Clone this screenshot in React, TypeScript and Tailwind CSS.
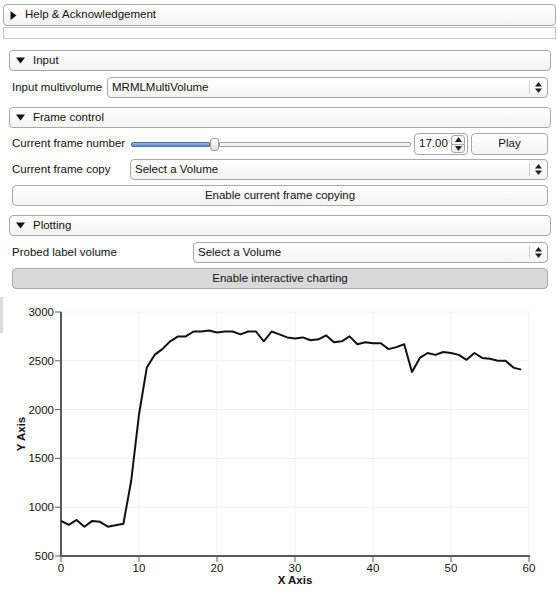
import React from 'react';

const values = [
  860, 820, 870, 800, 860, 850, 800, 815, 830, 1270,
  1950, 2430, 2560, 2620, 2700, 2750, 2750, 2800, 2800, 2810,
  2790, 2800, 2800, 2770, 2800, 2800, 2700, 2800, 2770, 2740,
  2730, 2740, 2710, 2720, 2760, 2690, 2700, 2750, 2670, 2690,
  2680, 2680, 2620, 2640, 2670, 2385, 2530, 2580, 2560, 2590,
  2580, 2560, 2510, 2580, 2530, 2520, 2500, 2500, 2430, 2410,
];

const font = { fontFamily: '"Liberation Sans", Arial, sans-serif' };

function Header({ title, open }: { title: string; open: boolean }) {
  return (
    <div className="flex items-center h-[21px] rounded-[4px] border border-[#a9a9a9] bg-gradient-to-b from-white to-[#f3f3f3] pl-[6px] gap-[8px] text-[11.5px] text-[#111]">
      {open ? (
        <svg width="9" height="7" viewBox="0 0 9 7"><path d="M0 0.5h9L4.5 6.5z" fill="#111" /></svg>
      ) : (
        <svg width="7" height="9" viewBox="0 0 7 9"><path d="M0.5 0v9L6.5 4.5z" fill="#111" /></svg>
      )}
      <span>{title}</span>
    </div>
  );
}

function Combo({ text, className }: { text: string; className?: string }) {
  return (
    <div className={`flex items-center h-[21px] rounded-[4px] border border-[#a9a9a9] bg-gradient-to-b from-white to-[#f4f4f4] text-[11.5px] text-[#111] ${className ?? ''}`}>
      <span className="flex-1 pl-[4px]">{text}</span>
      <div className="w-px h-[13px] bg-[#cfcfcf]" />
      <div className="w-[17px] flex justify-center">
        <svg width="7" height="11" viewBox="0 0 7 11">
          <path d="M0 4.5h7L3.5 0z" fill="#222" />
          <path d="M0 6.5h7L3.5 11z" fill="#222" />
        </svg>
      </div>
    </div>
  );
}

function Button({ text, pressed }: { text: string; pressed?: boolean }) {
  return (
    <div
      className={`flex items-center justify-center h-[21px] rounded-[4px] border border-[#a9a9a9] text-[11.5px] text-[#111] ${
        pressed ? 'bg-[#d9d9d9]' : 'bg-gradient-to-b from-white to-[#f4f4f4]'
      }`}
    >
      {text}
    </div>
  );
}

function Chart() {
  const x0 = 61;
  const xs = 7.8;
  const top = 295;
  const yb = 556 - top;
  const ys = 244 / 2500;
  const px = (i: number) => x0 + i * xs;
  const py = (v: number) => yb - (v - 500) * ys;
  const pts = values.map((v, i) => `${px(i).toFixed(1)},${py(v).toFixed(1)}`).join(' ');
  const yTicks = [500, 1000, 1500, 2000, 2500, 3000];
  const xTicks = [0, 10, 20, 30, 40, 50, 60];
  return (
    <svg width="554" height="304" viewBox="3 0 554 304" className="block" style={font}>
      {yTicks.slice(1).map(t => (
        <line key={t} x1={x0} x2={px(60)} y1={py(t)} y2={py(t)} stroke="#efefef" strokeWidth="1" />
      ))}
      {xTicks.slice(1).map(t => (
        <line key={t} x1={px(t)} x2={px(t)} y1={py(3000)} y2={yb} stroke="#efefef" strokeWidth="1" />
      ))}
      <line x1={x0} x2={x0} y1={py(3000)} y2={yb + 1} stroke="#5a5a5a" strokeWidth="2" />
      <line x1={x0} x2={px(60) + 1} y1={yb} y2={yb} stroke="#5a5a5a" strokeWidth="2" />
      {yTicks.map(t => (
        <g key={t}>
          <line x1={x0 - 6} x2={x0} y1={py(t)} y2={py(t)} stroke="#5a5a5a" strokeWidth="1" />
          <text x={x0 - 7} y={py(t) + 4} fontSize="11.5" textAnchor="end" fill="#111">{t}</text>
        </g>
      ))}
      {xTicks.map(t => (
        <g key={t}>
          <line x1={px(t)} x2={px(t)} y1={yb} y2={yb + 6} stroke="#5a5a5a" strokeWidth="1" />
          <text x={px(t)} y={yb + 16} fontSize="11.5" textAnchor="middle" fill="#111">{t}</text>
        </g>
      ))}
      <text x={px(30)} y={yb + 28} fontSize="11.5" fontWeight="bold" textAnchor="middle" fill="#111">X Axis</text>
      <text x={0} y={0} fontSize="11.5" fontWeight="bold" textAnchor="middle" fill="#111" transform={`translate(25 ${434 - top}) rotate(-90)`}>Y Axis</text>
      <polyline points={pts} fill="none" stroke="#111" strokeWidth="2" strokeLinejoin="round" />
    </svg>
  );
}

export default function App() {
  return (
    <div className="w-[557px] h-[599px] bg-white overflow-hidden" style={font}>
      <div className="pt-[4px] pl-[3px] pr-[1px]">
        <div className="flex items-center h-[22px] rounded-[4px] border border-[#a9a9a9] bg-gradient-to-b from-white to-[#f3f3f3] pl-[6px] gap-[8px] text-[11.5px] text-[#111]">
          <svg width="7" height="9" viewBox="0 0 7 9"><path d="M0.5 0v9L6.5 4.5z" fill="#111" /></svg>
          <span>Help &amp; Acknowledgement</span>
        </div>
        <div className="mt-px h-[12px] border border-[#c8c8c8]" />
      </div>

      <div className="pl-[9px] pr-[6px] mt-[11px]">
        <Header title="Input" open />
        <div className="flex items-center mt-[6px] pl-[3px] pr-[3px]">
          <span className="text-[11.5px] text-[#111] w-[95px]">Input multivolume</span>
          <Combo text="MRMLMultiVolume" className="flex-1" />
        </div>

        <div className="mt-[9px]">
          <Header title="Frame control" open />
        </div>
        <div className="flex items-center mt-[5px] pl-[3px] pr-[3px] h-[22px]">
          <span className="text-[11.5px] text-[#111] w-[119px]">Current frame number</span>
          <div className="flex items-center w-[280px] h-[13px]">
            <div className="w-[79px] h-[5px] rounded-l-[2px] border border-[#4e73a0] bg-gradient-to-b from-[#9cbde3] to-[#5d89bd]" />
            <div className="w-[9px] h-[13px] rounded-[3px] border border-[#9a9a9a] bg-gradient-to-b from-white to-[#dedede] shrink-0" />
            <div className="flex-1 h-[5px] rounded-r-[2px] border border-[#a0a0a0] bg-[#f2f2f2]" />
          </div>
          <div className="ml-[3px] flex items-center h-[22px] w-[54px] rounded-[4px] border border-[#a9a9a9] bg-white">
            <span className="flex-1 text-[11.5px] text-[#111] pl-[4px]">17.00</span>
            <div className="flex flex-col w-[14px] h-[18px] mr-[2px] rounded-[3px] border border-[#a9a9a9] bg-gradient-to-b from-white to-[#ececec]">
              <div className="flex-1 flex items-center justify-center border-b border-[#a9a9a9]">
                <svg width="7" height="5" viewBox="0 0 7 5"><path d="M0 5h7L3.5 0z" fill="#222" /></svg>
              </div>
              <div className="flex-1 flex items-center justify-center">
                <svg width="7" height="5" viewBox="0 0 7 5"><path d="M0 0h7L3.5 5z" fill="#222" /></svg>
              </div>
            </div>
          </div>
          <div className="ml-[3px] flex-1">
            <div className="flex items-center justify-center h-[22px] rounded-[4px] border border-[#a9a9a9] bg-gradient-to-b from-white to-[#f4f4f4] text-[11.5px] text-[#111]">Play</div>
          </div>
        </div>
        <div className="flex items-center mt-[4px] pl-[3px] pr-[3px]">
          <span className="text-[11.5px] text-[#111] w-[118px]">Current frame copy</span>
          <Combo text="Select a Volume" className="flex-1" />
        </div>
        <div className="mt-[5px] pl-[3px] pr-[3px]">
          <Button text="Enable current frame copying" />
        </div>

        <div className="mt-[9px]">
          <Header title="Plotting" open />
        </div>
        <div className="flex items-center mt-[6px] pl-[3px] pr-[3px]">
          <span className="text-[11.5px] text-[#111] w-[181px]">Probed label volume</span>
          <Combo text="Select a Volume" className="flex-1" />
        </div>
        <div className="mt-[5px] pl-[3px] pr-[3px]">
          <Button text="Enable interactive charting" pressed />
        </div>
      </div>

      <div className="flex mt-[6px]">
        <div className="w-[3px] h-[36px] mt-[2px] bg-[#dcdcdc] shrink-0" />
        <Chart />
      </div>
    </div>
  );
}
